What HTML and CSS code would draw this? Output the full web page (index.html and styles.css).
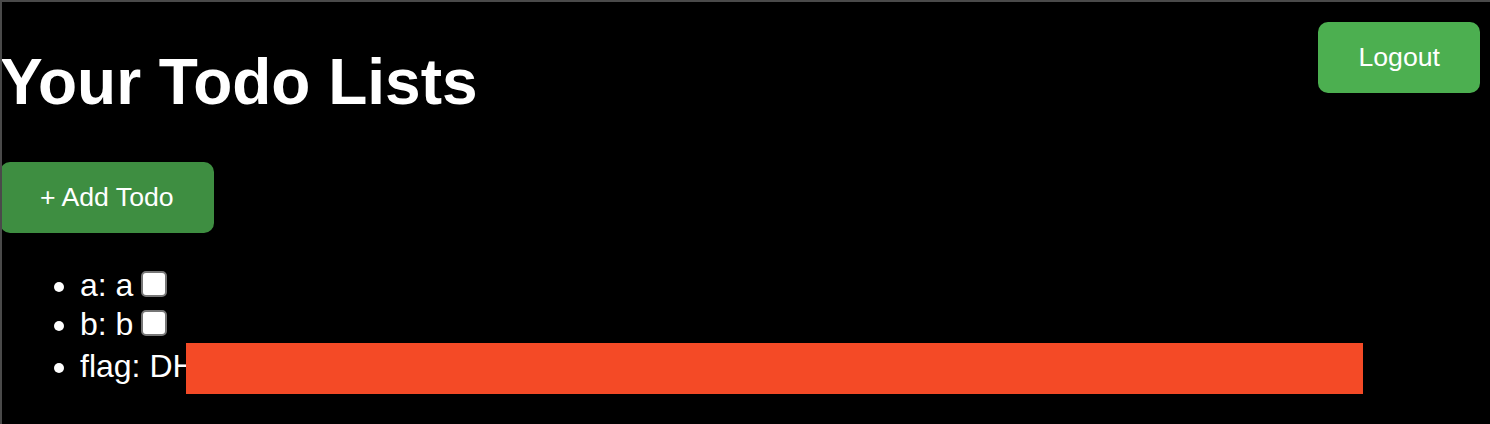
FILE: index.html
```html
<!DOCTYPE html>
<html lang="en">

<head>
    <meta charset="UTF-8">
    <meta name="viewport" content="width=device-width, initial-scale=1.0">
    <title>Todo Lists</title>
    <link rel="stylesheet" href="styles.css">
</head>

<body>
    <div class="header">
        <h1>Your Todo Lists</h1>
        <button class="btn logout-button">Logout</button>
    </div>

    <button class="btn add-button">+ Add Todo</button>

    <ul class="todo-list">
        <li>a: a<input type="checkbox"></li>
        <li>b: b<input type="checkbox"></li>
        <li>flag: DH<span class="redacted"></span></li>
    </ul>
</body>

</html>
```

FILE: styles.css
```css
html {
    background-color: #000;
}

body {
    margin: 0;
    padding-top: 2px;
    min-height: 100vh;
    box-sizing: border-box;
    background-color: #000;
    color: #fff;
    font-family: "Liberation Sans", Arial, sans-serif;
}

/* window frame drawn over the page edge */
body::before {
    content: "";
    position: fixed;
    top: 0;
    left: 0;
    right: 0;
    bottom: 0;
    border-top: 2px solid #4a4a4a;
    border-left: 2px solid #4a4a4a;
    pointer-events: none;
    z-index: 10;
}

.header {
    display: flex;
    justify-content: space-between;
    align-items: flex-start;
}

h1 {
    font-size: 64px;
    margin: 43px 0;
}

.btn {
    display: block;
    padding: 20px 40px;
    font-family: inherit;
    font-size: 26.67px;
    line-height: normal;
    color: #fff;
    background-color: #4caf50;
    border: none;
    border-radius: 10px;
    cursor: pointer;
}

.logout-button {
    margin: 20px 10px 0 0;
}

.add-button {
    background-color: #3e8e41;
}

.todo-list {
    margin: 32px 0;
    padding-left: 80px;
    font-size: 32px;
}

.todo-list input[type="checkbox"] {
    appearance: none;
    width: 26px;
    height: 26px;
    margin: 6px 6px 7px 8px;
    background-color: #fff;
    border: 2px solid #767676;
    border-radius: 5px;
    vertical-align: -8px;
}

.redacted {
    display: inline-block;
    width: 1177px;
    height: 51px;
    margin-left: -10px;
    vertical-align: -17px;
    background-color: #f44a26;
}
```
